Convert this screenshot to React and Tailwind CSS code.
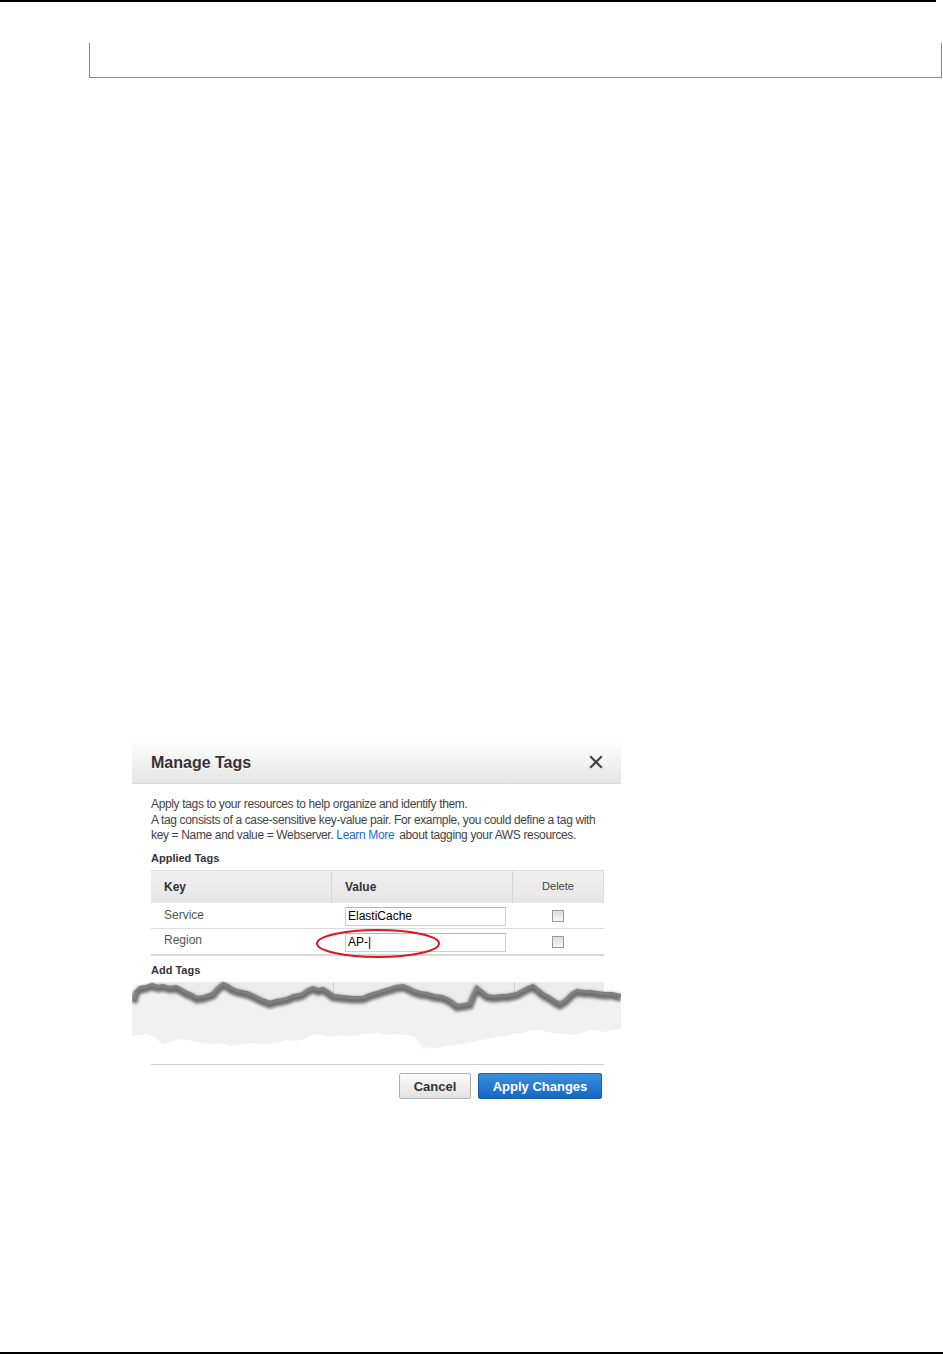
import React from "react";

const topJag =
  "M2,21 L4,12 L8,8 L14,7 L20,5 L26,7 L31,6 L38,8 L44,7 L48,9 L55,13 L60,15 L65,18 L72,17 L78,15 L81,14 L86,8 L91,4 L96,6 L100,9 L105,11 L110,12 L115,13 L122,16 L130,20 L138,23 L144,21 L150,20 L155,19 L162,16 L168,15 L171,14 L176,10 L181,8 L186,10 L191,9 L196,12 L201,16 L210,17 L220,18 L231,18 L238,15 L245,13 L251,11 L258,9 L264,7 L271,6 L276,8 L282,11 L288,13 L295,14 L302,16 L310,17 L315,19 L320,22 L325,26 L332,25 L338,24 L341,16 L345,8 L350,12 L355,16 L362,17 L370,16 L375,16 L380,15 L385,14 L392,10 L396,8 L401,6 L406,10 L411,14 L418,18 L424,22 L428,24 L434,20 L440,14 L445,11 L452,12 L458,12 L465,13 L472,14 L480,14 L489,16";

const bottomJag =
  "L489,51 L480,52 L472,54 L465,53 L458,52 L450,55 L442,57 L431,56 L422,55 L412,53 L405,52 L398,53 L390,55 L381,56 L373,58 L365,59 L355,61 L345,63 L331,66 L322,67 L315,68 L305,70 L298,69 L291,71 L287,64 L281,58 L273,57 L265,56 L255,57 L246,55 L231,56 L220,58 L210,57 L198,59 L190,57 L181,56 L175,60 L165,63 L155,62 L145,65 L131,66 L120,65 L108,67 L98,68 L88,65 L78,66 L65,64 L56,62 L48,61 L40,64 L31,66 L25,61 L20,58 L15,56 L8,57 L0,58 L0,30 Z";

function TornEdge() {
  return (
    <svg width="489" height="73" viewBox="0 0 489 73" className="block">
      <defs>
        <filter id="tornBlur" x="-5%" y="-50%" width="110%" height="200%">
          <feGaussianBlur stdDeviation="1.6" />
        </filter>
      </defs>
      {/* header of the Add Tags table, cut off */}
      <rect x="19" y="4" width="453" height="30" fill="#ececec" />
      <line x1="201.5" y1="4" x2="201.5" y2="30" stroke="#d4d4d4" />
      <line x1="382.5" y1="4" x2="382.5" y2="30" stroke="#d4d4d4" />
      {/* torn paper */}
      <path d={topJag + " " + bottomJag} fill="#f1f1f1" />
      <path
        d={topJag}
        transform="translate(0,4)"
        fill="none"
        stroke="#6e6e6e"
        strokeWidth="7"
        filter="url(#tornBlur)"
      />
      <path d={topJag} transform="translate(0,1.5)" fill="none" stroke="#808080" strokeWidth="3" />
    </svg>
  );
}

function Checkbox() {
  return (
    <span className="inline-block w-[12px] h-[12px] border border-[#9a9a9a] bg-gradient-to-b from-[#dcdcdc] to-[#f7f7f7]" />
  );
}

export default function App() {
  return (
    <div className="min-h-[1354px] bg-white flex flex-col font-['Liberation_Sans',Arial,sans-serif]">
      {/* page header rule */}
      <div className="h-[2px] w-[936px] bg-black" />

      {/* continued box from previous page */}
      <div className="mt-[41px] ml-[89px] w-[853px] h-[35px] border-x border-b border-[#8c8c8c]" />

      {/* Manage Tags dialog */}
      <div className="relative mt-[662px] ml-[132px] w-[489px]">
        <div className="h-[44px] flex items-center justify-between pl-[19px] pr-[18px] bg-gradient-to-b from-white to-[#e5e5e5] border-b border-[#d8d8d8]">
          <span className="text-[16px] font-bold text-[#333] [text-shadow:0_1px_0_#fff] pt-[3px]">
            Manage Tags
          </span>
          <svg width="14" height="14" viewBox="0 0 14 14" className="mt-[1px]">
            <path d="M2 2 L12 12 M12 2 L2 12" stroke="#444" strokeWidth="2.2" strokeLinecap="square" />
          </svg>
        </div>

        <div className="pl-[19px] pr-[17px] pt-[13px] text-[12px] leading-[15px] text-[#444] tracking-[-0.35px]">
          <div className="mb-[1px]">Apply tags to your resources to help organize and identify them.</div>
          <div>A tag consists of a case-sensitive key-value pair. For example, you could define a tag with</div>
          <div className="flex">
            <span>key = Name and value = Webserver.</span>
            <span className="ml-[3px] text-[#1a6fc9]">Learn More</span>
            <span className="ml-[5px]">about tagging your AWS resources.</span>
          </div>

          <div className="mt-[8px] mb-[4px] text-[11px] font-bold text-[#333] tracking-normal">Applied Tags</div>

          <div className="tracking-normal">
            <div className="flex h-[33px] items-center bg-gradient-to-b from-[#f0f0f0] to-[#e6e6e6] border-t border-r border-[#dcdcdc] text-[#333]">
              <div className="w-[181px] h-full flex items-center pl-[13px] font-bold text-[12px] border-r border-[#d6d6d6]">
                Key
              </div>
              <div className="w-[181px] h-full flex items-center pl-[13px] font-bold text-[12px] border-r border-[#d6d6d6]">
                Value
              </div>
              <div className="flex-1 h-full flex items-center justify-center text-[11px] text-[#444] -mt-[2px]">
                Delete
              </div>
            </div>
            <div className="flex h-[26px] items-center border-b border-[#dcdcdc]">
              <div className="w-[181px] pl-[13px] -mt-[1px] text-[12px] text-[#555]">Service</div>
              <div className="w-[181px] pl-[13px]">
                <div className="w-[161px] h-[19px] mt-[2px] border border-[#cfcfcf] border-t-[#b8b8b8] pl-[2px] text-[12px] leading-[17px] text-black">
                  ElastiCache
                </div>
              </div>
              <div className="flex-1 flex justify-center pr-[1px]">
                <Checkbox />
              </div>
            </div>
            <div className="flex h-[27px] items-center border-b-2 border-[#d8d8d8]">
              <div className="w-[181px] pl-[13px] -mt-[3px] text-[12px] text-[#555]">Region</div>
              <div className="w-[181px] pl-[13px]">
                <div className="w-[161px] h-[19px] mt-[1px] border border-[#cfcfcf] border-t-[#b8b8b8] pl-[2px] text-[12px] leading-[17px] text-black">
                  AP-<span className="font-light">|</span>
                </div>
              </div>
              <div className="flex-1 flex justify-center pr-[1px]">
                <Checkbox />
              </div>
            </div>
          </div>

          <div className="mt-[7px] text-[11px] font-bold text-[#333] tracking-normal">Add Tags</div>
        </div>

        <TornEdge />

        <div className="mr-[17px] ml-[19px] mt-[13px] border-t border-[#cfcfcf]" />
        <div className="flex justify-end gap-[7px] pr-[19px] mt-[8px]">
          <button className="w-[72px] h-[26px] rounded-[2px] border border-[#b0b0b0] bg-gradient-to-b from-[#fbfbfb] to-[#e2e2e2] text-[13px] font-bold text-[#333] pt-[1px]">
            Cancel
          </button>
          <button className="w-[124px] h-[26px] rounded-[2px] border border-[#1b5fae] bg-gradient-to-b from-[#3a8fdc] to-[#1467c4] text-[13px] font-bold text-white pt-[1px]">
            Apply Changes
          </button>
        </div>

        {/* red highlight ellipse */}
        <svg width="126" height="31" viewBox="0 0 126 31" className="absolute left-[183px] top-[188px]">
          <ellipse cx="63" cy="15.5" rx="61" ry="13.5" fill="none" stroke="#e0141e" strokeWidth="2" />
        </svg>
      </div>

      {/* page footer rule */}
      <div className="mt-auto h-[2px] w-full bg-black" />
    </div>
  );
}
